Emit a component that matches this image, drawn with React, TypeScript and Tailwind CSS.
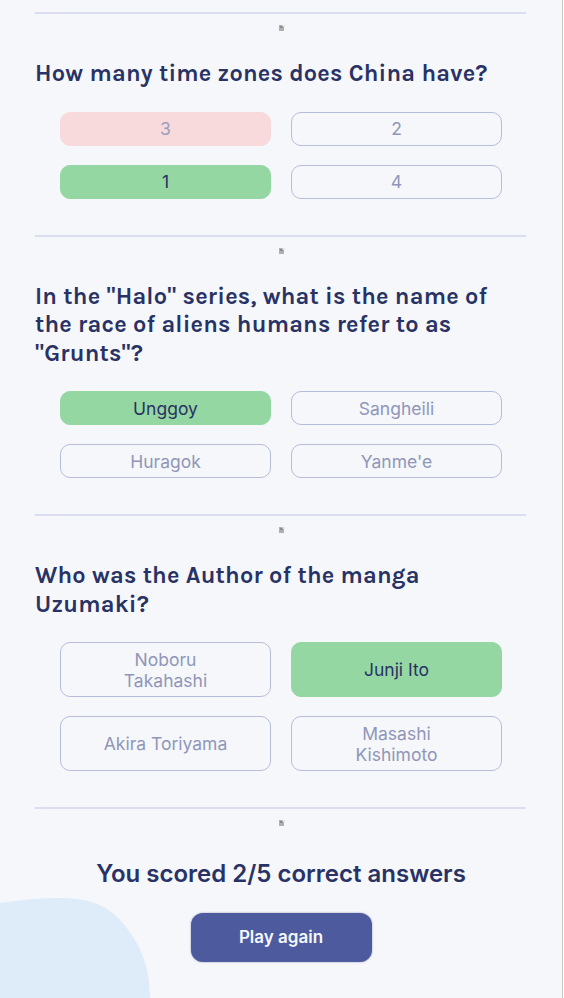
import React from "react";

type Ans = { text: string; state: "none" | "correct" | "wrong" };
type Q = { q: string; answers: Ans[] };

const questions: Q[] = [
  {
    q: "How many time zones does China have?",
    answers: [
      { text: "3", state: "wrong" },
      { text: "2", state: "none" },
      { text: "1", state: "correct" },
      { text: "4", state: "none" },
    ],
  },
  {
    q: 'In the "Halo" series, what is the name of the race of aliens humans refer to as "Grunts"?',
    answers: [
      { text: "Unggoy", state: "correct" },
      { text: "Sangheili", state: "none" },
      { text: "Huragok", state: "none" },
      { text: "Yanme'e", state: "none" },
    ],
  },
  {
    q: "Who was the Author of the manga Uzumaki?",
    answers: [
      { text: "Noboru Takahashi", state: "none" },
      { text: "Junji Ito", state: "correct" },
      { text: "Akira Toriyama", state: "none" },
      { text: "Masashi Kishimoto", state: "none" },
    ],
  },
];

function BrokenImg() {
  return (
    <svg width="6" height="6" viewBox="0 0 6 6" className="block">
      <rect x="0" y="0" width="5" height="6" fill="#b0b0b0" />
      <rect x="1" y="1" width="3" height="2" fill="#8a8a8a" />
      <rect x="3.5" y="0" width="2.5" height="2" fill="#e6e6e6" />
    </svg>
  );
}

function Divider() {
  return (
    <>
      <div className="h-[2px] mr-px bg-[#dbdef0]" />
      <div className="h-[45px] flex justify-center pt-[11px] pl-[2px]">
        <BrokenImg />
      </div>
    </>
  );
}

function AnswerBtn({ a }: { a: Ans }) {
  const base =
    "flex items-center justify-center text-center rounded-[10px] px-[38px] py-[5.5px] text-[17.5px] leading-[21px] border";
  if (a.state === "correct")
    return <div className={`${base} bg-[#94d7a2] border-[#94d7a2] text-[#293264]`}>{a.text}</div>;
  if (a.state === "wrong")
    return <div className={`${base} bg-[#f8dadc] border-[#f8dadc] text-[#9aa0bf]`}>{a.text}</div>;
  return <div className={`${base} bg-transparent border-[#b6bcda] text-[#9096b8]`}>{a.text}</div>;
}

export default function App() {
  return (
    <div
      className="relative min-h-[998px] w-full overflow-hidden bg-[#f5f7fb] flex"
      style={{ fontFamily: "Inter, 'Noto Sans', sans-serif" }}
    >
      <svg
        className="absolute left-0 bottom-0"
        width="152"
        height="100"
        viewBox="0 0 152 100"
      >
        <path
          d="M0 5 C 20 2, 40 0, 58 0 C 85 0, 105 5, 120 22 C 138 42, 150 65, 150 100 L 0 100 Z"
          fill="#deebf8"
        />
      </svg>
      <div className="relative flex-1 pl-[35px] pr-[35px] pt-[12px]">
        {questions.map((q, i) => (
          <div key={i} className="flex flex-col">
            <Divider />
            <h2
              className="text-[23.5px] leading-[28.5px] font-bold text-[#293264] tracking-[0.2px]"
              style={{ fontFamily: "Karla, Inter, 'Noto Sans', sans-serif" }}
            >
              {q.q}
            </h2>
            <div className="mt-[24px] mb-[36px] grid grid-cols-2 gap-x-[20px] gap-y-[19px] px-[25px]">
              {q.answers.map((a, j) => (
                <AnswerBtn key={j} a={a} />
              ))}
            </div>
          </div>
        ))}
        <div className="h-[2px] mr-px bg-[#dbdef0]" />
        <div className="flex justify-center pt-[11px] pl-[2px]">
          <BrokenImg />
        </div>
        <div className="mt-[33px] flex flex-col items-center">
          <p className="text-[24px] leading-[30px] font-semibold text-[#293264]">
            You scored 2/5 correct answers
          </p>
          <button className="mt-[24px] w-[181px] h-[49px] rounded-[12px] bg-[#4d5b9e] text-[#f5f7fb] text-[17px] font-semibold shadow-[0_0_2px_rgba(41,50,100,0.5)]">
            Play again
          </button>
        </div>
      </div>
      <div className="w-px bg-[#c9c9c9]" />
      <div className="w-px bg-white" />
    </div>
  );
}
